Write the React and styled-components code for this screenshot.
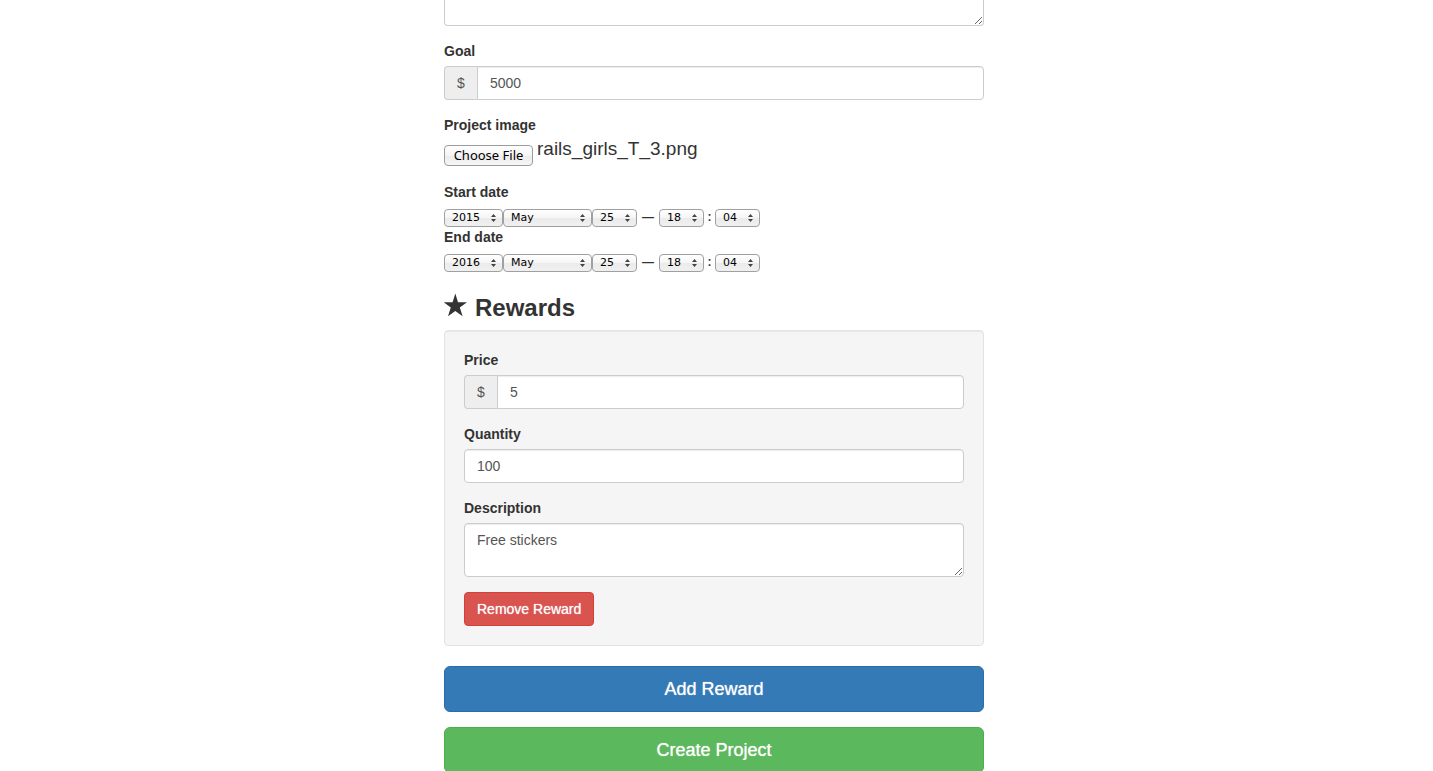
import React, { useRef, useState } from "react";
import styled, { createGlobalStyle } from "styled-components";

const sans = '"Liberation Sans", Arial, sans-serif';

const GlobalStyle = createGlobalStyle`
  *, *::before, *::after { box-sizing: border-box; }
  body {
    margin: 0;
    background: #fff;
    color: #333;
    font-family: ${sans};
    font-size: 14px;
    line-height: 20px;
  }
`;

const Page = styled.main`
  height: 100vh;
  overflow: hidden;
  padding-right: 5px;
`;

const Form = styled.form`
  max-width: 540px;
  margin: 0 auto;
`;

const Field = styled.div`
  margin-bottom: 15px;
`;

const Label = styled.label`
  display: block;
  margin-bottom: 5px;
  font-weight: 700;
`;

const Input = styled.input`
  display: block;
  flex: 1;
  width: 100%;
  min-width: 0;
  height: 34px;
  padding: 6px 12px;
  border: 1px solid #ccc;
  border-radius: ${(p) => (p.$grouped ? "0 4px 4px 0" : "4px")};
  background: #fff;
  box-shadow: inset 0 1px 1px rgba(0, 0, 0, 0.075);
  color: #555;
  font: 14px/20px ${sans};
`;

const TextArea = styled.textarea`
  display: block;
  width: 100%;
  height: 54px;
  padding: 6px 12px;
  border: 1px solid #ccc;
  border-radius: 4px;
  background: #fff;
  box-shadow: inset 0 1px 1px rgba(0, 0, 0, 0.075);
  color: #555;
  font: 14px/20px ${sans};
  resize: vertical;
`;

const TopTextArea = styled(TextArea)`
  height: 26px;
  padding: 0 12px;
  border-top: 0;
  border-radius: 0 0 4px 4px;
  box-shadow: none;
`;

const InputGroup = styled.div`
  display: flex;
`;

const Addon = styled.span`
  width: 33px;
  padding: 6px 0;
  border: 1px solid #ccc;
  border-right: 0;
  border-radius: 4px 0 0 4px;
  background: #eee;
  color: #555;
  text-align: center;
`;

const FileRow = styled.div`
  display: flex;
  align-items: flex-start;
  gap: 4px;
  height: 27px;
`;

const FileButton = styled.button`
  width: 89px;
  height: 21px;
  margin: 5px 0 0;
  padding: 0 0 2px;
  border: 1px solid #9c9c9c;
  border-radius: 4px;
  background: linear-gradient(#fff, #f4f4f4 50%, #ebebeb 50%, #f6f6f6);
  color: #000;
  font: 13px/16px "Noto Sans", sans-serif;
  white-space: nowrap;
`;

const FileName = styled.output`
  font-size: 19px;
  line-height: 18px;
`;

const DateRow = styled.div`
  display: flex;
  align-items: flex-end;
  height: 20px;
`;

const SelectBox = styled.span`
  position: relative;
  width: ${(p) => p.$width}px;
  height: 18px;

  svg {
    position: absolute;
    top: 5px;
    right: 7px;
    pointer-events: none;
  }
`;

const Select = styled.select`
  display: block;
  appearance: none;
  width: 100%;
  height: 18px;
  margin: 0;
  padding: 0 7px;
  border: 1px solid #a0a0a0;
  border-radius: 4px;
  background: linear-gradient(#fff, #f5f5f5 50%, #ebebeb 50%, #f0f0f0);
  color: #000;
  font: 11px/16px "DejaVu Sans", sans-serif;
`;

const Separator = styled.span`
  width: ${(p) => p.$width}px;
  font-size: 12px;
  font-weight: 700;
  text-align: center;
`;

const Heading = styled.h3`
  display: flex;
  align-items: flex-end;
  gap: 8px;
  height: 28px;
  margin: 20px 0 10px;
  font-size: 24px;
  font-weight: 700;
  line-height: 24px;

  svg { align-self: center; }
`;

const Well = styled.section`
  margin-bottom: 20px;
  padding: 19px;
  border: 1px solid #e3e3e3;
  border-radius: 4px;
  background: #f5f5f5;
  box-shadow: inset 0 1px 1px rgba(0, 0, 0, 0.05);
`;

const Button = styled.button`
  display: block;
  margin: 0;
  padding: 6px 12px;
  border: 1px solid #d43f3a;
  border-radius: 4px;
  background: #d9534f;
  color: #fff;
  font: 14px/20px ${sans};
  text-shadow: 0 0 1px rgba(255, 255, 255, 0.8);
  cursor: pointer;
`;

const BlockButton = styled(Button)`
  width: 100%;
  height: 46px;
  margin-bottom: 15px;
  padding: 10px 16px;
  border-color: ${(p) => (p.$success ? "#4cae4c" : "#2e6da4")};
  border-radius: 6px;
  background: ${(p) => (p.$success ? "#5cb85c" : "#337ab7")};
  font-size: 18px;
  line-height: 24px;
`;

function Picker({ width, value, label, id }) {
  return (
    <SelectBox $width={width}>
      <Select id={id} aria-label={label} defaultValue={value}>
        <option>{value}</option>
      </Select>
      <svg width="5" height="8" viewBox="0 0 5 8" fill="#444" aria-hidden="true">
        <path d="M2.5 0 5 3H0zM2.5 8 0 5h5z" />
      </svg>
    </SelectBox>
  );
}

function DateField({ id, label, year }) {
  return (
    <div>
      <Label htmlFor={id}>{label}</Label>
      <DateRow>
        <Picker id={id} width={59} value={year} label={`${label} year`} />
        <Picker width={89} value="May" label={`${label} month`} />
        <Picker width={45} value="25" label={`${label} day`} />
        <Separator $width={22}>—</Separator>
        <Picker width={45} value="18" label={`${label} hour`} />
        <Separator $width={11}>:</Separator>
        <Picker width={45} value="04" label={`${label} minute`} />
      </DateRow>
    </div>
  );
}

function MoneyField({ id, label, value }) {
  return (
    <Field>
      <Label htmlFor={id}>{label}</Label>
      <InputGroup>
        <Addon>$</Addon>
        <Input id={id} type="text" defaultValue={value} $grouped />
      </InputGroup>
    </Field>
  );
}

export default function App() {
  const fileInput = useRef(null);
  const [fileName, setFileName] = useState("rails_girls_T_3.png");

  return (
    <>
      <GlobalStyle />
      <Page>
        <Form onSubmit={(e) => e.preventDefault()}>
          <Field>
            <TopTextArea aria-label="Project description" />
          </Field>
          <MoneyField id="goal" label="Goal" value="5000" />
          <Field>
            <Label htmlFor="image">Project image</Label>
            <FileRow>
              <input
                ref={fileInput}
                id="image"
                type="file"
                hidden
                onChange={(e) => setFileName(e.target.files[0]?.name ?? "")}
              />
              <FileButton type="button" onClick={() => fileInput.current.click()}>
                Choose File
              </FileButton>
              <FileName htmlFor="image">{fileName}</FileName>
            </FileRow>
          </Field>
          <DateField id="start" label="Start date" year="2015" />
          <DateField id="end" label="End date" year="2016" />
          <Heading>
            <svg width="23" height="26" viewBox="0 0 23 26" fill="#333" aria-hidden="true">
              <path d="M11.3 0.5 14 9.3H23L15.8 14.6 18.6 23.3 11.3 18 4 23.3 6.8 14.6 -0.3 9.3H8.6z" />
            </svg>
            <span>Rewards</span>
          </Heading>
          <Well>
            <MoneyField id="price" label="Price" value="5" />
            <Field>
              <Label htmlFor="quantity">Quantity</Label>
              <Input id="quantity" type="text" defaultValue="100" />
            </Field>
            <Field>
              <Label htmlFor="description">Description</Label>
              <TextArea id="description" defaultValue="Free stickers" />
            </Field>
            <Button type="button">Remove Reward</Button>
          </Well>
          <BlockButton type="button">Add Reward</BlockButton>
          <BlockButton type="submit" $success>Create Project</BlockButton>
        </Form>
      </Page>
    </>
  );
}
